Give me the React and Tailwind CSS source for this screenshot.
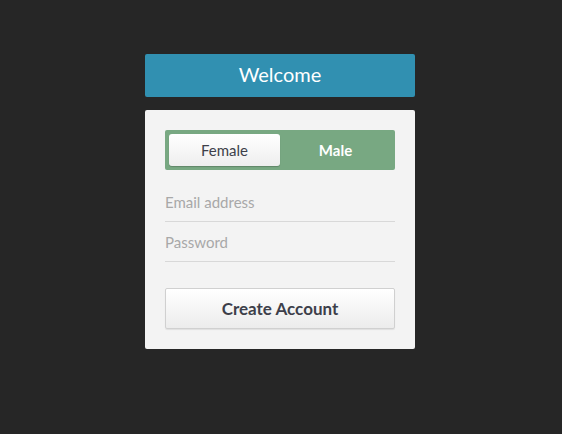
import React, { useState } from 'react';

function App() {
  const [gender, setGender] = useState('female');

  return (
    <div className="min-h-screen w-full bg-[#262626] pt-[54px] pr-0.5 font-['Lato','Open_Sans',sans-serif]">
      <div className="mx-auto w-[270px]">
        <div className="flex h-[43px] items-center justify-center rounded-[2px] bg-[#3190b1] pb-[3px] text-[20px] text-white">
          Welcome
        </div>

        <div className="mt-[13px] rounded-[2px] bg-[#f3f3f3] px-5 pt-5 pb-5">
          <div className="flex h-10 rounded-[2px] bg-[#78a882] p-1">
            <button
              className={`flex-1 rounded-[3px] text-[15px] ${gender === 'female' ? 'bg-gradient-to-b from-white to-[#eeeeee] text-[#3d3f4a] shadow-[0_1px_1px_rgba(0,0,0,0.2)]' : 'font-bold text-white'}`}
              onClick={() => setGender('female')}
            >
              Female
            </button>
            <button
              className={`flex-1 rounded-[3px] text-[15px] ${gender === 'male' ? 'bg-gradient-to-b from-white to-[#eeeeee] text-[#3d3f4a] shadow-[0_1px_1px_rgba(0,0,0,0.2)]' : 'font-bold text-white'}`}
              onClick={() => setGender('male')}
            >
              Male
            </button>
          </div>

          <div className="mt-[12px]">
            <input
              type="email"
              placeholder="Email address"
              className="block h-10 w-full border-b border-[#d8d8d8] bg-transparent text-[15px] text-[#3d3f4a] outline-none placeholder:text-[#a8a8a8]"
            />
            <input
              type="password"
              placeholder="Password"
              className="block h-10 w-full border-b border-[#d8d8d8] bg-transparent text-[15px] text-[#3d3f4a] outline-none placeholder:text-[#a8a8a8]"
            />
          </div>

          <button className="mt-[26px] flex h-[41px] w-full items-center justify-center rounded-[2px] border border-[#d0d0d0] bg-gradient-to-b from-white to-[#ececec] text-[17px] font-bold text-[#3d3f4a] shadow-[0_1px_1px_rgba(0,0,0,0.08)]">
            Create Account
          </button>
        </div>
      </div>
    </div>
  );
}

export default App;
